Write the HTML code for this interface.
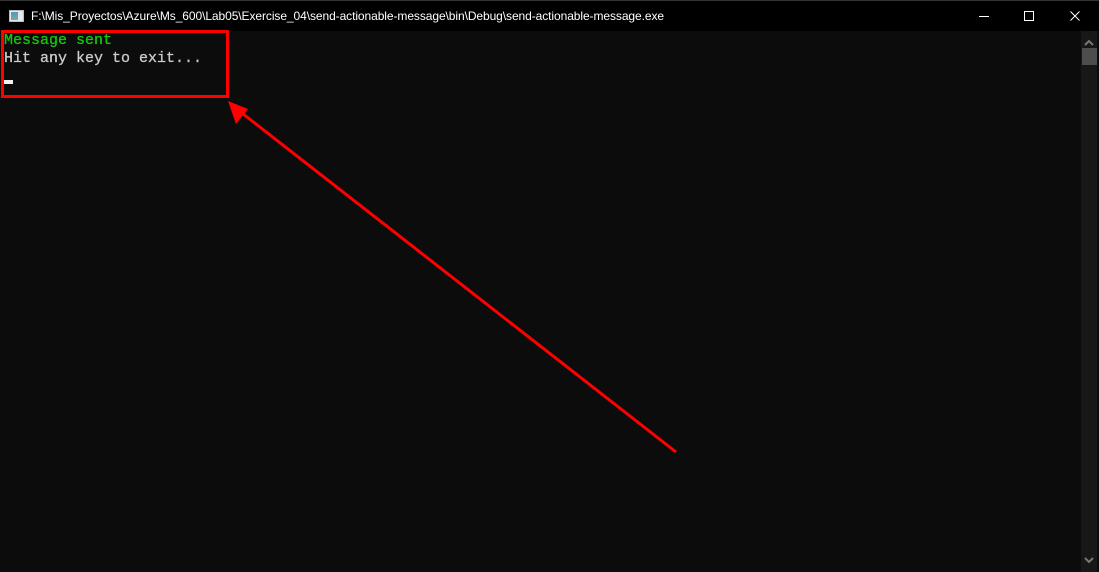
<!DOCTYPE html>
<html><head><meta charset="utf-8"><style>
*{margin:0;padding:0;box-sizing:border-box}
body{width:1099px;height:572px;background:#0c0c0c;position:relative;overflow:hidden;font-family:"Liberation Sans",sans-serif}
#title{position:absolute;left:0;top:0;width:1099px;height:31px;background:#000;border-top:1px solid #333}
#title .t{position:absolute;left:31px;top:8px;color:#fff;font-size:12px;letter-spacing:-0.08px}
#icon{position:absolute;left:9px;top:9px;width:15px;height:12px;background:#e8e8e8;border:1px solid #bbb}
#icon:before{content:"";position:absolute;left:1px;top:1px;width:7px;height:8px;background:linear-gradient(#4f9bb6,#7aa);}
#con{position:absolute;left:4px;top:32px;font-family:"Liberation Mono",monospace;font-size:15px;line-height:18px;color:#cccccc;white-space:pre;-webkit-text-stroke:0.3px currentColor}
#sb{position:absolute;left:1081px;top:31px;width:16px;height:541px;background:#171717}
#thumb{position:absolute;left:1082px;top:48px;width:15px;height:17px;background:#4d4d4d}
</style></head><body>
<div id="title"><div id="icon"></div><div class="t">F:\Mis_Proyectos\Azure\Ms_600\Lab05\Exercise_04\send-actionable-message\bin\Debug\send-actionable-message.exe</div>
<svg style="position:absolute;left:950px;top:0" width="149" height="31">
<line x1="29" y1="15.5" x2="39" y2="15.5" stroke="#fff" stroke-width="1"/>
<rect x="74.5" y="10.5" width="9" height="9" fill="none" stroke="#fff"/>
<path d="M120.5 10.5 L129.5 19.5 M129.5 10.5 L120.5 19.5" stroke="#fff" stroke-width="1"/>
</svg></div>
<div id="con"><span style="color:#16c60c">Message sent</span>
Hit any key to exit...
</div>
<div style="position:absolute;left:4px;top:80px;width:9px;height:4px;background:#f2f2f2"></div>
<div id="sb"></div><div id="thumb"></div>
<svg style="position:absolute;left:1081px;top:31px" width="16" height="541">
<path d="M4 14 L8 10 L12 14" stroke="#777" stroke-width="2" fill="none"/>
<path d="M4 527 L8 531 L12 527" stroke="#777" stroke-width="2" fill="none"/>
</svg>
<svg style="position:absolute;left:0;top:0" width="1099" height="572">
<rect x="2.5" y="31.5" width="225" height="65" fill="none" stroke="#f00" stroke-width="3"/>
<line x1="676" y1="452" x2="238" y2="110" stroke="#f00" stroke-width="3"/>
<polygon points="228,101 248,109 236,124" fill="#f00"/>
</svg>
</body></html>
